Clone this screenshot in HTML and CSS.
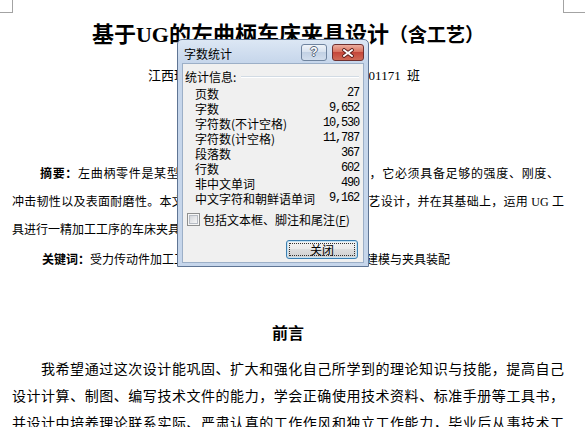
FILE: index.html
```
<!DOCTYPE html>
<html lang="zh-CN">
<head>
  <meta charset="UTF-8" />
  <title>基于UG的左曲柄车床夹具设计</title>
  <link rel="stylesheet" href="styles.css">
</head>
<body>
  <div class="page">
    <div class="marks">
      <span class="mark mark-l"></span>
      <span class="mark mark-r"></span>
    </div>

    <div class="content">
      <h1 class="title">基于UG的左曲柄车床夹具设计<small>（含工艺）</small></h1>
      <p class="author">江西理工大学机电工程学院 机械系 0901171 班</p>

      <!-- abstract, one span per printed line -->
      <div class="abstract">
        <span class="ln first"><b>摘要：</b>左曲柄零件是某型汽车变速操纵机构中的重要受力件，它必须具备足够的强度、刚度、</span>
        <span class="ln">冲击韧性以及表面耐磨性。本文首先对左曲柄零件进行机械加工工艺设计，并在其基础上，运用 UG 工</span>
        <span class="ln last">具进行一精加工工序的车床夹具设计。</span>
      </div>

      <p class="keywords"><b>关键词：</b>受力传动件加工工艺；左曲柄；车床专用夹具；三维建模与夹具装配</p>

      <h2 class="heading">前言</h2>

      <div class="body-text">
        <span class="ln first">我希望通过这次设计能巩固、扩大和强化自己所学到的理论知识与技能，提高自己</span>
        <span class="ln">设计计算、制图、编写技术文件的能力，学会正确使用技术资料、标准手册等工具书，</span>
        <span class="ln">并设计中培养理论联系实际、严肃认真的工作作风和独立工作能力，毕业后从事技术工</span>
      </div>
    </div>
  </div>

  <!-- Word count dialog -->
  <div class="dialog">
    <div class="titlebar">
      <span class="caption">字数统计</span>
      <span class="tb-btn tb-help">?</span>
      <span class="tb-btn tb-close">
        <svg width="12" height="10" viewBox="0 0 12 10">
          <path d="M2 2 L10 8 M10 2 L2 8" stroke="#5c1d1a" stroke-width="3.6" stroke-linecap="square" fill="none" />
          <path d="M2 2 L10 8 M10 2 L2 8" stroke="#ffffff" stroke-width="1.8" stroke-linecap="square" fill="none" />
        </svg>
      </span>
    </div>

    <div class="panel">
      <div class="info-row">
        <span>统计信息:</span>
        <span class="rule"></span>
      </div>

      <div class="stats">
        <div class="stat"><span>页数</span><span class="num">27</span></div>
        <div class="stat"><span>字数</span><span class="num">9,652</span></div>
        <div class="stat"><span>字符数(不计空格)</span><span class="num">10,530</span></div>
        <div class="stat"><span>字符数(计空格)</span><span class="num">11,787</span></div>
        <div class="stat"><span>段落数</span><span class="num">367</span></div>
        <div class="stat"><span>行数</span><span class="num">602</span></div>
        <div class="stat"><span>非中文单词</span><span class="num">490</span></div>
        <div class="stat"><span>中文字符和朝鲜语单词</span><span class="num">9,162</span></div>
      </div>

      <label class="check-row">
        <span class="check"></span>
        <span>包括文本框、脚注和尾注(<u>F</u>)</span>
      </label>

      <div class="btn-row">
        <button class="btn"><span class="focus">关闭</span></button>
      </div>
    </div>
  </div>
</body>
</html>
```

FILE: styles.css
```
body {
  margin: 0;
  background: #fff;
  color: #000;
  font-family: "Liberation Serif", "Noto Sans CJK SC", serif;
  overflow: hidden;
}
.page {
  width: 585px;
  height: 427px;
  overflow: hidden;
}
.marks {
  display: flex;
  justify-content: space-between;
  height: 14px;
}
.mark {
  display: block;
  height: 13px;
  box-sizing: border-box;
  border-bottom: 1px solid #a3a3a3;
}
.mark-l {
  width: 13px;
  border-right: 1px solid #a3a3a3;
}
.mark-r {
  width: 22px;
  border-left: 1px solid #a3a3a3;
}
.content {
  padding: 0 21px 0 12px;
}
.title {
  margin: 6px 0 0;
  font-size: 22px;
  line-height: 30px;
  font-weight: bold;
  text-align: center;
}
.title small {
  font-size: 19px;
}
.author {
  margin: 15px 0 0;
  padding-right: 8px;
  font-size: 13px;
  line-height: 20px;
  word-spacing: 3px;
  text-align: center;
}
.ln {
  display: block;
  text-align: justify;
  text-align-last: justify;
}
.ln.last {
  text-align-last: left;
}
.abstract {
  margin-top: 74px;
  font-size: 12px;
  line-height: 28px;
}
.abstract .first {
  text-indent: 28px;
  padding-right: 5px;
}
.keywords {
  margin: 2px 0 0;
  font-size: 12px;
  line-height: 28px;
  text-indent: 30px;
}
.heading {
  margin: 46px 0 0;
  font-size: 16px;
  line-height: 28px;
  text-align: center;
  font-weight: bold;
}
.body-text {
  margin-top: 8px;
  font-size: 14px;
  line-height: 27px;
}
.body-text .first {
  text-indent: 29px;
}

/* dialog */
.dialog {
  position: absolute;
  left: 177px;
  top: 39px;
  width: 192px;
  height: 228px;
  box-sizing: border-box;
  border: 1px solid #5f7594;
  border-radius: 5px 5px 0 0;
  background: linear-gradient(#dce7f4, #c6d6eb 23px, #c6d6eb);
  padding: 0 4px 3px;
  display: flex;
  flex-direction: column;
  font-family: "Noto Sans CJK SC", sans-serif;
  font-size: 12px;
  line-height: 15px;
}
.titlebar {
  height: 23px;
  display: flex;
  align-items: flex-start;
}
.caption {
  flex: 1;
  padding: 7px 0 0 2px;
  line-height: 14px;
}
.tb-btn {
  margin-top: 4px;
  height: 17px;
  box-sizing: border-box;
  border-radius: 3px;
  display: flex;
  align-items: center;
  justify-content: center;
}
.tb-help {
  width: 26px;
  margin-right: 5px;
  border: 1px solid #6f849f;
  background: linear-gradient(#f0f4f9, #d8e2ef 45%, #c2d1e4 50%, #d2deed);
  color: #fff;
  font-family: "Liberation Sans", sans-serif;
  font-weight: bold;
  font-size: 12px;
  text-shadow: 1px 0 #55657a, -1px 0 #55657a, 0 1px #55657a, 0 -1px #55657a;
}
.tb-close {
  width: 32px;
  border: 1px solid #6e3030;
  background: linear-gradient(#ecaea0, #d9735f 45%, #c5473a 50%, #d06a56);
}
.panel {
  flex: 1;
  background: #f0f0f0;
  border: 1px solid #9cafc7;
  padding: 6px 4px 0 2px;
}
.info-row {
  display: flex;
  align-items: center;
  line-height: 14px;
}
.rule {
  flex: 1;
  margin: 0 0 0 5px;
  border-top: 1px solid #d2dbe4;
  border-bottom: 1px solid #fff;
}
.stats {
  margin-top: 2px;
}
.stat {
  display: flex;
  justify-content: space-between;
  padding-left: 10px;
}
.num {
  font-family: "Liberation Mono", monospace;
  font-size: 12px;
  letter-spacing: -1.2px;
}
.check-row {
  display: flex;
  align-items: center;
  margin-top: 6px;
  padding-left: 2px;
}
.check {
  position: relative;
  width: 13px;
  height: 13px;
  box-sizing: border-box;
  border: 1px solid #8e8f8f;
  background: #f6f6f6;
  margin-right: 3px;
}
.check::after {
  content: "";
  position: absolute;
  left: 1px;
  top: 1px;
  right: 1px;
  bottom: 1px;
  border: 1px solid #b7bcc4;
  background: linear-gradient(135deg, #d3d6db, #f7f7f7);
}
.btn-row {
  display: flex;
  justify-content: flex-end;
  margin-top: 13px;
}
.btn {
  width: 72px;
  height: 19px;
  margin: 0 1px 0 0;
  padding: 2px;
  box-sizing: border-box;
  border: 1px solid #3c7fb1;
  border-radius: 3px;
  background: linear-gradient(#f3f3f3, #ebebeb 45%, #dddddd 50%, #d0d0d0);
  box-shadow: inset 0 0 0 1px #c4e3f5;
  font-family: "Noto Sans CJK SC", sans-serif;
  font-size: 12px;
  color: #000;
}
.focus {
  display: block;
  height: 100%;
  box-sizing: border-box;
  border: 1px dotted #333;
  line-height: 11px;
  text-align: center;
}
```
